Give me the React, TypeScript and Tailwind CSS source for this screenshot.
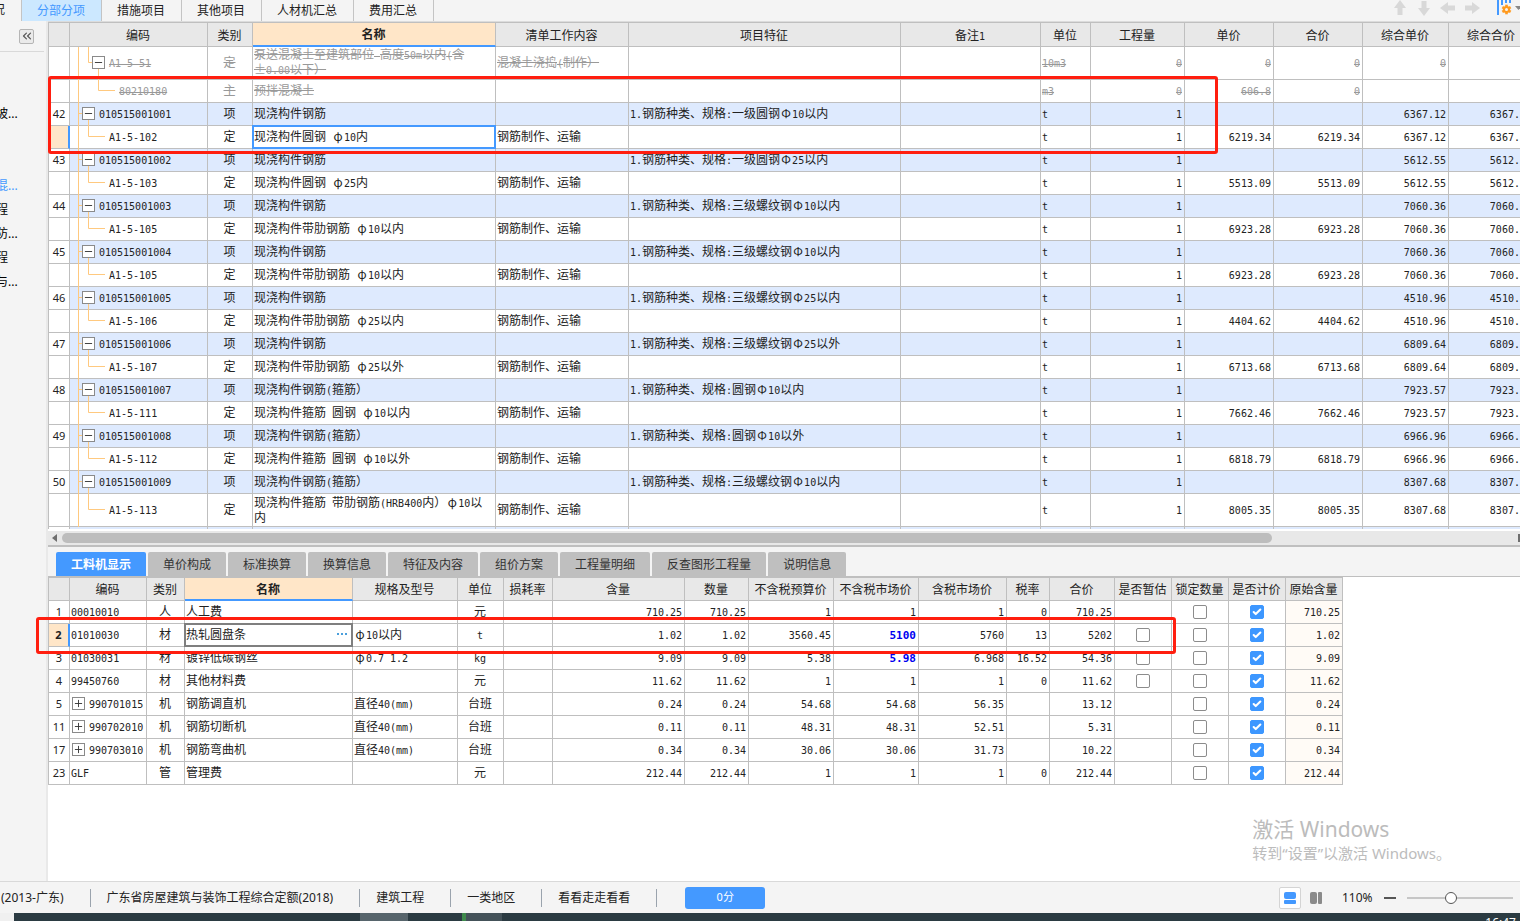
import { Fragment, useState } from 'react'
import clsx from 'clsx'
import { Check, ChevronsLeft, Minus, Plus } from 'lucide-react'

type Align = 'left' | 'center' | 'right'
type Column = { title: string; width: string; align: Align; active?: boolean }

const alignClass = { left: 'text-left', center: 'text-center', right: 'text-right' }

const mainColumns: Column[] = [
  { title: '编码', width: 'w-[138px]', align: 'left' },
  { title: '类别', width: 'w-[45px]', align: 'center' },
  { title: '名称', width: 'w-[243px]', align: 'left', active: true },
  { title: '清单工作内容', width: 'w-[133px]', align: 'left' },
  { title: '项目特征', width: 'w-[272px]', align: 'left' },
  { title: '备注1', width: 'w-[140px]', align: 'left' },
  { title: '单位', width: 'w-[50px]', align: 'left' },
  { title: '工程量', width: 'w-[94px]', align: 'right' },
  { title: '单价', width: 'w-[89px]', align: 'right' },
  { title: '合价', width: 'w-[89px]', align: 'right' },
  { title: '综合单价', width: 'w-[86px]', align: 'right' },
  { title: '综合合价', width: 'w-[86px]', align: 'right' },
]

const detailColumns: Column[] = [
  { title: '编码', width: 'w-[77px]', align: 'left' },
  { title: '类别', width: 'w-[38px]', align: 'center' },
  { title: '名称', width: 'w-[168px]', align: 'left', active: true },
  { title: '规格及型号', width: 'w-[105px]', align: 'left' },
  { title: '单位', width: 'w-[46px]', align: 'center' },
  { title: '损耗率', width: 'w-[49px]', align: 'right' },
  { title: '含量', width: 'w-[132px]', align: 'right' },
  { title: '数量', width: 'w-[64px]', align: 'right' },
  { title: '不含税预算价', width: 'w-[85px]', align: 'right' },
  { title: '不含税市场价', width: 'w-[85px]', align: 'right' },
  { title: '含税市场价', width: 'w-[88px]', align: 'right' },
  { title: '税率', width: 'w-[43px]', align: 'right' },
  { title: '合价', width: 'w-[65px]', align: 'right' },
  { title: '是否暂估', width: 'w-[57px]', align: 'center' },
  { title: '锁定数量', width: 'w-[57px]', align: 'center' },
  { title: '是否计价', width: 'w-[57px]', align: 'center' },
  { title: '原始含量', width: 'w-[57px]', align: 'right' },
]

type Kind = 'sub' | 'leaf' | 'item' | 'quota'
type MainRow = { no?: string; kind: Kind; tall?: boolean; selected?: boolean; cells: string[] }

// one bill item followed by the quota under it
const bills = [
  ['42', '010515001001', '现浇构件钢筋', '1.钢筋种类、规格:一级圆钢Φ10以内', 'A1-5-102', '现浇构件圆钢 φ10内', '6219.34', '6367.12'],
  ['43', '010515001002', '现浇构件钢筋', '1.钢筋种类、规格:一级圆钢Φ25以内', 'A1-5-103', '现浇构件圆钢 φ25内', '5513.09', '5612.55'],
  ['44', '010515001003', '现浇构件钢筋', '1.钢筋种类、规格:三级螺纹钢Φ10以内', 'A1-5-105', '现浇构件带肋钢筋 φ10以内', '6923.28', '7060.36'],
  ['45', '010515001004', '现浇构件钢筋', '1.钢筋种类、规格:三级螺纹钢Φ10以内', 'A1-5-105', '现浇构件带肋钢筋 φ10以内', '6923.28', '7060.36'],
  ['46', '010515001005', '现浇构件钢筋', '1.钢筋种类、规格:三级螺纹钢Φ25以内', 'A1-5-106', '现浇构件带肋钢筋 φ25以内', '4404.62', '4510.96'],
  ['47', '010515001006', '现浇构件钢筋', '1.钢筋种类、规格:三级螺纹钢Φ25以外', 'A1-5-107', '现浇构件带肋钢筋 φ25以外', '6713.68', '6809.64'],
  ['48', '010515001007', '现浇构件钢筋(箍筋）', '1.钢筋种类、规格:圆钢Φ10以内', 'A1-5-111', '现浇构件箍筋 圆钢 φ10以内', '7662.46', '7923.57'],
  ['49', '010515001008', '现浇构件钢筋(箍筋）', '1.钢筋种类、规格:圆钢Φ10以外', 'A1-5-112', '现浇构件箍筋 圆钢 φ10以外', '6818.79', '6966.96'],
  ['50', '010515001009', '现浇构件钢筋(箍筋）', '1.钢筋种类、规格:三级螺纹钢Φ10以内', 'A1-5-113', '现浇构件箍筋 带肋钢筋(HRB400内）φ10以\n内', '8005.35', '8307.68'],
]

const mainRows: MainRow[] = [
  {
    kind: 'sub',
    tall: true,
    cells: ['A1-5-51', '定', '泵送混凝土至建筑部位 高度50m以内(含\n±0.00以下）', '混凝土浇捣(制作）', '', '', '10m3', '0', '0', '0', '0', ''],
  },
  { kind: 'leaf', cells: ['80210180', '主', '预拌混凝土', '', '', '', 'm3', '0', '606.8', '0', '', ''] },
  ...bills.flatMap(([no, code, name, feature, quota, quotaName, price, total]): MainRow[] => [
    { no, kind: 'item', cells: [code, '项', name, '', feature, '', 't', '1', '', '', total, total] },
    {
      kind: 'quota',
      tall: quotaName.includes('\n'),
      selected: no === '42',
      cells: [quota, '定', quotaName, '钢筋制作、运输', '', '', 't', '1', price, price, total, total],
    },
  ]),
]

type DetailRow = { no: string; group?: boolean; estimate?: boolean; selected?: boolean; edited?: boolean; cells: string[] }

const detailRows: DetailRow[] = [
  { no: '1', cells: ['00010010', '人', '人工费', '', '元', '', '710.25', '710.25', '1', '1', '1', '0', '710.25'] },
  { no: '2', estimate: true, selected: true, edited: true, cells: ['01010030', '材', '热轧圆盘条', 'φ10以内', 't', '', '1.02', '1.02', '3560.45', '5100', '5760', '13', '5202'] },
  { no: '3', estimate: true, edited: true, cells: ['01030031', '材', '镀锌低碳钢丝', 'φ0.7 1.2', 'kg', '', '9.09', '9.09', '5.38', '5.98', '6.968', '16.52', '54.36'] },
  { no: '4', estimate: true, cells: ['99450760', '材', '其他材料费', '', '元', '', '11.62', '11.62', '1', '1', '1', '0', '11.62'] },
  { no: '5', group: true, cells: ['990701015', '机', '钢筋调直机', '直径40(mm)', '台班', '', '0.24', '0.24', '54.68', '54.68', '56.35', '', '13.12'] },
  { no: '11', group: true, cells: ['990702010', '机', '钢筋切断机', '直径40(mm)', '台班', '', '0.11', '0.11', '48.31', '48.31', '52.51', '', '5.31'] },
  { no: '17', group: true, cells: ['990703010', '机', '钢筋弯曲机', '直径40(mm)', '台班', '', '0.34', '0.34', '30.06', '30.06', '31.73', '', '10.22'] },
  { no: '23', cells: ['GLF', '管', '管理费', '', '元', '', '212.44', '212.44', '1', '1', '1', '0', '212.44'] },
]

const topTabs = ['分部分项', '措施项目', '其他项目', '人材机汇总', '费用汇总']
const detailTabs = ['工料机显示', '单价构成', '标准换算', '换算信息', '特征及内容', '组价方案', '工程量明细', '反查图形工程量', '说明信息']

const cell = 'border-r border-b border-[#bfbfbf] pt-0 pr-0.5 pb-0.5 pl-px whitespace-pre overflow-hidden leading-[14px]'
const checkCell = 'border-r border-b border-[#bfbfbf] p-0'
const indexCell = 'border-x border-b border-[#bfbfbf] p-0 text-center font-["Noto_Sans",sans-serif] text-[11px] leading-[14px]'

// Latin runs are half as wide as the Chinese characters
function GridText({ text, struck, edited }: { text: string; struck?: boolean; edited?: boolean }) {
  const line = struck && 'line-through'
  return (
    <>
      {text.split(/([\x20-\x7e]+|[φΦ±])/).map((part, i) => {
        if (!part) return null
        if (/^[φΦ±]$/.test(part)) return <span key={i} className={clsx('inline-block w-3 text-center leading-3', line)}>{part}</span>
        if (/^[\x20-\x7e]+$/.test(part)) {
          return (
            <span key={i} className={clsx('inline-block font-["DejaVu_Sans_Mono",monospace] leading-3', edited ? 'text-[11px]' : 'text-[10px]', line)}>
              {part}
            </span>
          )
        }
        return struck ? <span key={i} className="line-through">{part}</span> : <Fragment key={i}>{part}</Fragment>
      })}
    </>
  )
}

function HeaderRow({ columns, height }: { columns: Column[]; height: string }) {
  return (
    <tr className={height}>
      <th className="w-[22px] border border-[#bfbfbf] bg-[#e8e8e8] p-0" aria-label="序号" />
      {columns.map(c => (
        <th
          key={c.title}
          className={clsx(
            c.width,
            'border-t border-r border-[#bfbfbf] p-0 pr-px whitespace-nowrap',
            c.active ? 'border-b-2 border-b-[#4499ff] bg-[#ffe6c8] font-bold' : 'border-b bg-[#e8e8e8] font-normal'
          )}
        >
          <GridText text={c.title} />
        </th>
      ))}
    </tr>
  )
}

function ToggleBox({ open, label }: { open: boolean; label: string }) {
  const Icon = open ? Minus : Plus
  return (
    <button aria-label={label} className="relative flex size-[13px] shrink-0 items-center justify-center border border-[#8a8a8a] bg-white text-[#333]">
      <Icon className="size-[11px] shrink-0" strokeWidth={2} />
    </button>
  )
}

function TreeLines({ kind, height }: { kind: Kind; height: number }) {
  const mid = Math.floor(height / 2) - 0.5
  const paths = {
    sub: `M18.5 0V${mid}H23M28.5 ${mid + 6}V${height}`,
    leaf: `M28.5 0V${mid}H45`,
    item: `M9 ${mid}H13M18.5 ${mid + 6}V${height}`,
    quota: `M18.5 0V${mid}H35`,
  }
  return (
    <svg className="absolute top-0 left-0" width="50" height={height} fill="none" stroke="#ffc97f">
      <path d={`M8.5 0V${height}${paths[kind]}`} />
    </svg>
  )
}

function MainGrid() {
  return (
    <div className="overflow-hidden border-t border-[#dcdcdc] bg-white pb-0.5">
      <table className="w-px table-fixed border-separate border-spacing-0 text-xs text-[#222]">
        <thead>
          <HeaderRow columns={mainColumns} height="h-[25px]" />
        </thead>
        <tbody>
          {mainRows.map((row, r) => {
            const struck = row.kind === 'sub' || row.kind === 'leaf'
            return (
              <tr key={r} className={clsx(row.tall ? 'h-[33px]' : 'h-[23px]', struck && 'text-[#999]')}>
                <td className={clsx(indexCell, row.selected && 'border-r-2 border-r-[#4499ff] bg-[#ffe6c8]')}>{row.no}</td>
                {row.cells.map((text, i) => (
                  <td
                    key={i}
                    className={clsx(
                      i === 0 ? 'border-r border-b border-[#bfbfbf] p-0' : cell,
                      alignClass[mainColumns[i].align],
                      row.kind === 'item' && 'bg-[#deeafe]',
                      row.selected && i === 2 && 'relative overflow-visible'
                    )}
                  >
                    {i === 0 ? (
                      <div className={clsx('relative flex items-center pb-0.5', row.tall ? 'h-8' : 'h-[22px]')}>
                        <TreeLines kind={row.kind} height={row.tall ? 33 : 23} />
                        {row.kind === 'item' && <div className="ml-3 pr-1"><ToggleBox open label={text} /></div>}
                        {row.kind === 'sub' && <div className="ml-[22px] pr-1"><ToggleBox open label={text} /></div>}
                        <span className={clsx('leading-[14px]', row.kind === 'quota' && 'ml-[39px]', row.kind === 'leaf' && 'ml-[49px]')}>
                          <GridText text={text} struck={struck} />
                        </span>
                      </div>
                    ) : (
                      <GridText text={text} struck={struck} />
                    )}
                    {row.selected && i === 2 && <div className="pointer-events-none absolute -inset-px border-2 border-[#4499ff]" />}
                  </td>
                ))}
              </tr>
            )
          })}
          <tr className="h-0.5">
            <td className="border-x border-[#bfbfbf] p-0" />
            {mainColumns.map(c => <td key={c.title} className="border-r border-[#bfbfbf] bg-[#deeafe] p-0" />)}
          </tr>
        </tbody>
      </table>
    </div>
  )
}

function GridCheckbox({ label, checked = false }: { label: string; checked?: boolean }) {
  return (
    <label className="relative mx-auto flex size-3.5">
      <input
        type="checkbox"
        aria-label={label}
        defaultChecked={checked}
        className="peer size-3.5 appearance-none rounded-[2px] border border-[#8c8c8c] bg-white checked:border-[#3d97ff] checked:bg-[#3d97ff]"
      />
      <Check className="pointer-events-none absolute top-0.5 left-0.5 hidden size-2.5 text-white peer-checked:block" strokeWidth={5} />
    </label>
  )
}

function DetailGrid() {
  return (
    <table className="w-px table-fixed border-separate border-spacing-0 text-xs text-[#222]">
      <thead>
        <HeaderRow columns={detailColumns} height="h-6" />
      </thead>
      <tbody>
        {detailRows.map(row => (
          <tr key={row.no} className="h-[23px]">
            <td className={clsx(indexCell, row.selected && 'border-r-2 border-r-[#4499ff] bg-[#ffe6c8] font-bold')}>{row.no}</td>
            {row.cells.map((text, i) => {
              if (row.selected && i === 2) {
                return (
                  <td key={i} className="relative border-r border-b border-[#bfbfbf] p-0">
                    <div className="absolute -inset-px flex items-center border-2 border-[#7f7f7f] bg-white pb-0.5">
                      <input aria-label="名称" defaultValue={text} className="min-w-0 flex-1 text-xs leading-[14px] outline-none" />
                      <button aria-label="选择" className="flex gap-0.5 pr-1">
                        <i className="size-0.5 bg-[#4a9fdc]" />
                        <i className="size-0.5 bg-[#4a9fdc]" />
                        <i className="size-0.5 bg-[#4a9fdc]" />
                      </button>
                    </div>
                  </td>
                )
              }
              const edited = row.edited && i === 9
              return (
                <td key={i} className={clsx(cell, alignClass[detailColumns[i].align], edited && 'font-bold text-[#0000f0]')}>
                  {row.group && i === 0 ? (
                    <div className="flex items-center gap-1 pl-px">
                      <ToggleBox open={false} label={text} />
                      <span><GridText text={text} /></span>
                    </div>
                  ) : (
                    <GridText text={text} edited={edited} />
                  )}
                </td>
              )
            })}
            <td className={checkCell}>{row.estimate && <GridCheckbox label={`是否暂估 ${row.no}`} />}</td>
            <td className={checkCell}><GridCheckbox label={`锁定数量 ${row.no}`} /></td>
            <td className={checkCell}><GridCheckbox label={`是否计价 ${row.no}`} checked /></td>
            <td className={clsx(cell, 'bg-[#fffbf6] text-right')}><GridText text={row.cells[6]} /></td>
          </tr>
        ))}
      </tbody>
    </table>
  )
}

function MoveArrow({ label, turn }: { label: string; turn: string }) {
  return (
    <button aria-label={label} className="size-4">
      <svg viewBox="0 0 16 16" className={clsx('size-4', turn)} fill="#d8d8d8">
        <path d="M8 0l6 8h-3.500v7h-5V8H2z" />
      </svg>
    </button>
  )
}

function TopBar({ tab, onTab }: { tab: string; onTab: (t: string) => void }) {
  return (
    <header className="flex h-[21px] shrink-0 overflow-hidden text-xs text-[#222]">
      <button className="flex w-[22px] justify-end border-r border-[#c4c4c4] pr-4 leading-5">况</button>
      {topTabs.map(t => (
        <button
          key={t}
          onClick={() => onTab(t)}
          className={clsx('border-r border-[#c4c4c4] pr-4 pl-[15px]', t === tab ? 'bg-[#cce8ff] leading-[18px] text-[#4499ff]' : 'leading-5')}
        >
          {t}
        </button>
      ))}
      <div className="-mr-2 ml-auto flex gap-2">
        <MoveArrow label="上移" turn="rotate-0" />
        <MoveArrow label="下移" turn="rotate-180" />
        <MoveArrow label="左移" turn="-rotate-90" />
        <MoveArrow label="右移" turn="rotate-90" />
        <button aria-label="列设置" className="ml-2 flex">
          <svg width="32" height="16" viewBox="0 0 32 16">
            <path d="M2 0v15M6 0v5M10 0v3M14 0v3" stroke="#4499ff" strokeWidth="2" />
            <g fill="#ff9a1f" transform="translate(10.500 9.500)">
              <circle r="3.600" />
              <path d="M-1.300-4.800h2.600v9.600h-2.600z" />
              <path d="M-1.300-4.800h2.600v9.600h-2.600z" transform="rotate(60)" />
              <path d="M-1.300-4.800h2.600v9.600h-2.600z" transform="rotate(120)" />
              <circle r="1.500" fill="#f4f4f4" />
            </g>
            <path d="M19 6h7l-3.500 4z" fill="#888" />
          </svg>
        </button>
      </div>
    </header>
  )
}

function Sidebar() {
  const item = '-ml-1 block h-6 leading-6 whitespace-nowrap'
  return (
    <aside className="flex w-12 shrink-0 flex-col overflow-hidden border-r-2 border-[#e9e9e9] text-xs text-black">
      <div className="mr-0.5 flex h-[31px] items-center justify-end border-b border-[#d9d9d9] pr-2.5">
        <button aria-label="收起" className="flex size-[15px] items-center justify-center rounded-[2px] border border-[#b5b5b5] bg-[#eaeaea] text-[#555]">
          <ChevronsLeft className="size-3.5 shrink-0" strokeWidth={2} />
        </button>
      </div>
      <nav className="pt-[50px]">
        <a href="#" className={item}>坡...</a>
        <div className="pt-12">
          <a href="#" className={clsx(item, 'text-[#4499ff]')}>混...</a>
          <a href="#" className={item}>程</a>
          <a href="#" className={item}>防...</a>
          <a href="#" className={item}>程</a>
          <a href="#" className={item}>与...</a>
        </div>
      </nav>
    </aside>
  )
}

function ScrollTrack() {
  return (
    <div className="flex h-4 items-center border-b-2 border-[#bfbfbf] bg-[#e8e8e8] pl-1">
      <svg width="5" height="8" fill="#6e6e6e"><path d="M5 0v8L0 4z" /></svg>
      <div className="mr-auto ml-[5px] h-2.5 w-[82.4%] rounded-full bg-[#bdbdbd]" />
      <svg width="2" height="8" fill="#6e6e6e"><path d="M0 0v8h2V0z" /></svg>
    </div>
  )
}

function StatusBar() {
  const item = 'flex h-[18px] items-center border-r border-[#9aa3ad] pr-[26px] pl-4 whitespace-nowrap'
  return (
    <footer className="flex h-8 shrink-0 items-center border-t border-[#d9d9d9] text-xs text-[#222]">
      <span className={clsx(item, '-ml-[15px]')}>(2013-广东)</span>
      <span className={item}>广东省房屋建筑与装饰工程综合定额(2018)</span>
      <span className={item}>建筑工程</span>
      <span className={item}>一类地区</span>
      <span className={item}>看看走走看看</span>
      <button className="ml-7 h-[22px] w-20 rounded-[3px] bg-[#4499ff] text-[11px] text-white">0分</button>
      <div className="ml-auto flex items-center pr-[7px]">
        <button aria-label="上下布局" className="flex size-[22px] flex-col items-center justify-center gap-px rounded-[2px] border border-[#d4d4d4] bg-white">
          <i className="h-[7px] w-3 rounded-[2px] bg-[#4499ff]" />
          <i className="h-1 w-3 rounded-[1px] bg-[#4499ff]" />
        </button>
        <button aria-label="左右布局" className="ml-[9px] flex gap-px">
          <i className="h-3 w-[7px] rounded-[2px] bg-[#8a8a8a]" />
          <i className="h-3 w-1 rounded-[1px] bg-[#8a8a8a]" />
        </button>
        <span className="ml-5 w-8">110%</span>
        <button aria-label="缩小" className="ml-2.5 h-0.5 w-3 bg-[#555]" />
        <input
          type="range"
          aria-label="缩放"
          defaultValue={40}
          className="ml-[11px] h-3 w-[106px] appearance-none bg-transparent [&::-webkit-slider-runnable-track]:h-0.5 [&::-webkit-slider-runnable-track]:bg-[#c6c6c6] [&::-webkit-slider-thumb]:-mt-[5px] [&::-webkit-slider-thumb]:size-3 [&::-webkit-slider-thumb]:appearance-none [&::-webkit-slider-thumb]:rounded-full [&::-webkit-slider-thumb]:border [&::-webkit-slider-thumb]:border-[#555] [&::-webkit-slider-thumb]:bg-white"
        />
      </div>
    </footer>
  )
}

export default function App() {
  const [tab, setTab] = useState('分部分项')
  const [detailTab, setDetailTab] = useState('工料机显示')

  return (
    <div className='flex h-screen flex-col overflow-hidden bg-[#f4f4f4] font-["Noto_Sans","Noto_Sans_CJK_SC",sans-serif]'>
      <TopBar tab={tab} onTab={setTab} />
      <div className="flex min-h-0 flex-1">
        <Sidebar />
        <main className='relative flex min-w-0 flex-1 flex-col font-["Noto_Sans_CJK_SC",sans-serif]'>
          <section className="relative">
            <MainGrid />
            <ScrollTrack />
            <div className="pointer-events-none absolute top-[55px] left-0 h-[78px] w-[1170px] rounded-[3px] border-3 border-[#ff1e0f]" />
          </section>

          <div className="flex gap-0.5 pt-[5px] pl-2 text-xs text-[#333]">
            {detailTabs.map(t => (
              <button
                key={t}
                onClick={() => setDetailTab(t)}
                className={clsx('h-6 rounded-t-[2px] px-[15px] whitespace-nowrap', t === detailTab ? 'bg-[#4499ff] font-bold text-white' : 'bg-[#bfbfbf]')}
              >
                {t}
              </button>
            ))}
          </div>

          <section className="relative flex-1 border-t border-[#bfbfbf] bg-white">
            <DetailGrid />
            <div className="pointer-events-none absolute top-10 -left-3 h-[37px] w-[1140px] rounded-[3px] border-3 border-[#ff1e0f]" />
            <div className='absolute right-[69px] bottom-4 font-["Noto_Sans","Noto_Sans_CJK_SC",sans-serif] text-[#bcbcbc]'>
              <p className="text-[21px] leading-6">激活 Windows</p>
              <p className="text-[15px] leading-6">转到“设置”以激活 Windows。</p>
            </div>
          </section>
        </main>
      </div>
      <StatusBar />
      <div className="flex h-2 shrink-0 overflow-hidden bg-[#2b3b42] text-xs text-white">
        <div className="w-3.5 bg-[#f0f0f0]" />
        <div className="ml-[346px] w-12 bg-[#57656c]" />
        <div className="ml-[54px] w-1 bg-[#3f8a4c]" />
        <div className="w-9 bg-[#445259]" />
        <span className="mt-0.5 mr-1 ml-auto leading-4">16:47</span>
      </div>
    </div>
  )
}
